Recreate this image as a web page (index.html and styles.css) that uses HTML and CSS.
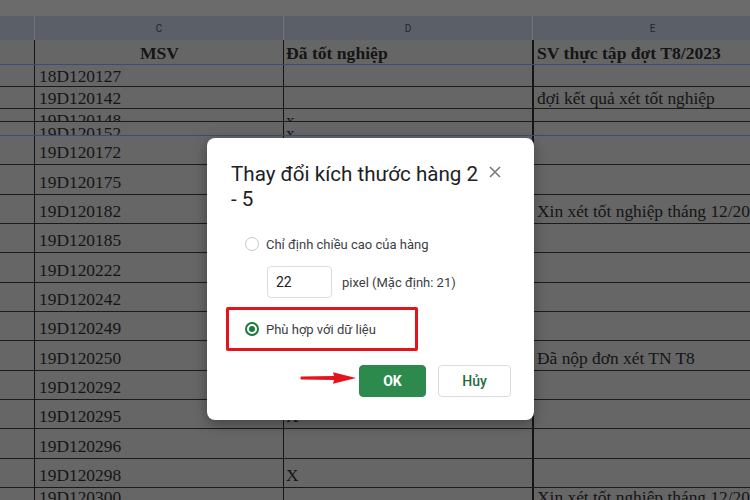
FILE: index.html
```html
<!DOCTYPE html>
<html>
<head>
<meta charset="UTF-8">
<link rel="stylesheet" href="styles.css">
</head>
<body>
  <div class="topbar"></div>

  <div class="sheet">
    <div class="row heads">
      <div class="stub"></div>
      <div class="cell colC">C</div>
      <div class="cell colD">D</div>
      <div class="cell colE">E</div>
    </div>
    <div class="row titles blue">
      <div class="stub"></div>
      <div class="cell colC center">MSV</div>
      <div class="cell colD">Đã tốt nghiệp</div>
      <div class="cell colE">SV thực tập đợt T8/2023</div>
    </div>
    <div class="row mid">
      <div class="stub"></div>
      <div class="cell colC">18D120127</div>
      <div class="cell colD"></div>
      <div class="cell colE"></div>
    </div>
    <div class="row mid">
      <div class="stub"></div>
      <div class="cell colC">19D120142</div>
      <div class="cell colD"></div>
      <div class="cell colE">đợi kết quả xét tốt nghiệp</div>
    </div>
    <div class="row thin h13">
      <div class="stub"></div>
      <div class="cell colC">19D120148</div>
      <div class="cell colD">x</div>
      <div class="cell colE"></div>
    </div>
    <div class="row thin h14 blue">
      <div class="stub"></div>
      <div class="cell colC">19D120152</div>
      <div class="cell colD">x</div>
      <div class="cell colE"></div>
    </div>
    <div class="row">
      <div class="stub"></div>
      <div class="cell colC">19D120172</div>
      <div class="cell colD"></div>
      <div class="cell colE"></div>
    </div>
    <div class="row">
      <div class="stub"></div>
      <div class="cell colC">19D120175</div>
      <div class="cell colD"></div>
      <div class="cell colE"></div>
    </div>
    <div class="row">
      <div class="stub"></div>
      <div class="cell colC">19D120182</div>
      <div class="cell colD"></div>
      <div class="cell colE">Xin xét tốt nghiệp tháng 12/2023</div>
    </div>
    <div class="row">
      <div class="stub"></div>
      <div class="cell colC">19D120185</div>
      <div class="cell colD"></div>
      <div class="cell colE"></div>
    </div>
    <div class="row">
      <div class="stub"></div>
      <div class="cell colC">19D120222</div>
      <div class="cell colD"></div>
      <div class="cell colE"></div>
    </div>
    <div class="row">
      <div class="stub"></div>
      <div class="cell colC">19D120242</div>
      <div class="cell colD"></div>
      <div class="cell colE"></div>
    </div>
    <div class="row">
      <div class="stub"></div>
      <div class="cell colC">19D120249</div>
      <div class="cell colD"></div>
      <div class="cell colE"></div>
    </div>
    <div class="row">
      <div class="stub"></div>
      <div class="cell colC">19D120250</div>
      <div class="cell colD"></div>
      <div class="cell colE">Đã nộp đơn xét TN T8</div>
    </div>
    <div class="row">
      <div class="stub"></div>
      <div class="cell colC">19D120292</div>
      <div class="cell colD"></div>
      <div class="cell colE"></div>
    </div>
    <div class="row">
      <div class="stub"></div>
      <div class="cell colC">19D120295</div>
      <div class="cell colD">X</div>
      <div class="cell colE"></div>
    </div>
    <div class="row">
      <div class="stub"></div>
      <div class="cell colC">19D120296</div>
      <div class="cell colD"></div>
      <div class="cell colE"></div>
    </div>
    <div class="row">
      <div class="stub"></div>
      <div class="cell colC">19D120298</div>
      <div class="cell colD">X</div>
      <div class="cell colE"></div>
    </div>
    <div class="row thin last">
      <div class="stub"></div>
      <div class="cell colC">19D120300</div>
      <div class="cell colD"></div>
      <div class="cell colE">Xin xét tốt nghiệp tháng 12/2023</div>
    </div>
  </div>

  <div class="dialog">
    <div class="dialog-head">
      <div class="dialog-title">Thay đổi kích thước hàng 2 - 5</div>
      <div class="close">
        <svg width="24" height="24" viewBox="0 0 24 24">
          <path d="M7 7 L17 17 M17 7 L7 17" stroke="#7a7a7a" stroke-width="1.6" fill="none"/>
        </svg>
      </div>
    </div>

    <div class="option">
      <span class="radio"></span>
      <span class="label">Chỉ định chiều cao của hàng</span>
    </div>

    <div class="size-row">
      <div class="input">22</div>
      <span class="label">pixel (Mặc định: 21)</span>
    </div>

    <div class="highlight">
      <span class="radio checked"></span>
      <span class="label">Phù hợp với dữ liệu</span>
    </div>

    <div class="buttons">
      <div class="btn ok">OK</div>
      <div class="btn cancel">Hủy</div>
    </div>

    <svg class="arrow" width="58" height="14" viewBox="0 0 58 14">
      <path d="M2 5.6 L35 5 L34 1.2 L57 7 L34 12.8 L35 9 L2 8.4 Q0.5 7 2 5.6 Z" fill="#e3141b"/>
    </svg>
  </div>
</body>
</html>
```

FILE: styles.css
```css
body
{
    margin: 0;
    padding: 0;
    width: 750px;
    height: 500px;
    overflow: hidden;
    background-color: #666666;
    position: relative;
}

.topbar
{
    height: 16px;
    background-color: #6b6b6b;
}

.sheet
{
    font-family: "Liberation Serif", serif;
    font-size: 17.4px;
    color: #151515;
}

.row
{
    display: flex;
    height: 29.33px;
    box-sizing: border-box;
    border-bottom: 1px solid #1b1b1b;
    white-space: nowrap;
}

.stub
{
    width: 34px;
    flex: none;
}

.cell
{
    display: flex;
    align-items: flex-end;
    box-sizing: border-box;
    padding: 0 3px 2px 3px;
    line-height: 19px;
    overflow: hidden;
    flex: none;
}

.colC
{
    width: 249px;
    border-left: 1px solid #151515;
    padding-left: 4px;
}

.colD
{
    width: 249px;
    border-left: 1px solid #151515;
    padding-left: 2px;
}

.colE
{
    width: 240px;
    border-left: 2px solid #151515;
    overflow: visible;
}

.center
{
    justify-content: center;
}

/* column letters */
.heads
{
    height: 24px;
    border-bottom: none;
    background-color: #5b5f67;
}

.heads .cell
{
    align-items: center;
    justify-content: center;
    padding: 0;
    font-family: Roboto, sans-serif;
    font-size: 10px;
    color: #262626;
    border-left: 1px solid #72757b;
}

.titles
{
    height: 25px;
    font-weight: bold;
    font-size: 17.6px;
}

.titles .cell
{
    line-height: 20px;
    padding-bottom: 1px;
}

.blue
{
    border-bottom-color: #34507a;
}

.mid
{
    height: 22px;
}

.mid .cell
{
    padding-bottom: 0;
}

.h13
{
    height: 13px;
}

.h14
{
    height: 14px;
}

.thin .cell
{
    align-items: flex-start;
    padding-top: 2px;
    padding-bottom: 0;
}

.last .cell
{
    padding-top: 0;
}

/* dialog */
.dialog
{
    position: absolute;
    left: 207px;
    top: 138px;
    width: 327px;
    box-sizing: border-box;
    padding: 24px 23px 23px 24px;
    background-color: #ffffff;
    border-radius: 8px;
    box-shadow: 0 4px 14px rgba(0, 0, 0, 0.35);
    font-family: Roboto, "Liberation Sans", sans-serif;
}

.dialog-head
{
    display: flex;
    align-items: flex-start;
}

.dialog-title
{
    flex: 1;
    font-size: 20.6px;
    line-height: 25px;
    color: #202124;
}

.close
{
    width: 24px;
    height: 24px;
    margin-top: -2px;
    margin-right: 4px;
}

.option
{
    display: flex;
    align-items: center;
    height: 20px;
    margin-top: 22px;
    margin-left: 14px;
    gap: 7px;
}

.label
{
    font-size: 13px;
    color: #3c4043;
}

.radio
{
    width: 14px;
    height: 14px;
    box-sizing: border-box;
    border: 1.5px solid #c6c6c6;
    border-radius: 50%;
    position: relative;
}

.radio.checked
{
    border: 2px solid #1c7a3c;
}

.radio.checked::after
{
    content: "";
    position: absolute;
    left: 2px;
    top: 2px;
    width: 6px;
    height: 6px;
    border-radius: 50%;
    background-color: #1c7a3c;
}

.size-row
{
    display: flex;
    align-items: center;
    gap: 10px;
    margin-top: 12px;
    margin-left: 36px;
}

.input
{
    width: 65px;
    height: 32px;
    box-sizing: border-box;
    border: 1px solid #dadce0;
    border-radius: 4px;
    padding-left: 8px;
    font-size: 14px;
    line-height: 30px;
    color: #222222;
}

.highlight
{
    display: flex;
    align-items: center;
    gap: 7px;
    width: 192px;
    height: 44px;
    box-sizing: border-box;
    margin-top: 9px;
    margin-left: -5px;
    padding-left: 16px;
    border: 3px solid #e3141b;
    border-radius: 2px;
}

.buttons
{
    display: flex;
    justify-content: flex-end;
    gap: 12px;
    margin-top: 14px;
}

.btn
{
    height: 32px;
    box-sizing: border-box;
    border-radius: 4px;
    font-size: 14px;
    line-height: 30px;
    text-align: center;
}

.ok
{
    width: 67px;
    background-color: #2b8a4c;
    border: 1px solid #2b8a4c;
    color: #ffffff;
    font-weight: bold;
}

.cancel
{
    width: 73px;
    border: 1px solid #dadce0;
    color: #1f6b3f;
    font-weight: 500;
}

.arrow
{
    position: absolute;
    left: 92px;
    top: 233px;
}
```
